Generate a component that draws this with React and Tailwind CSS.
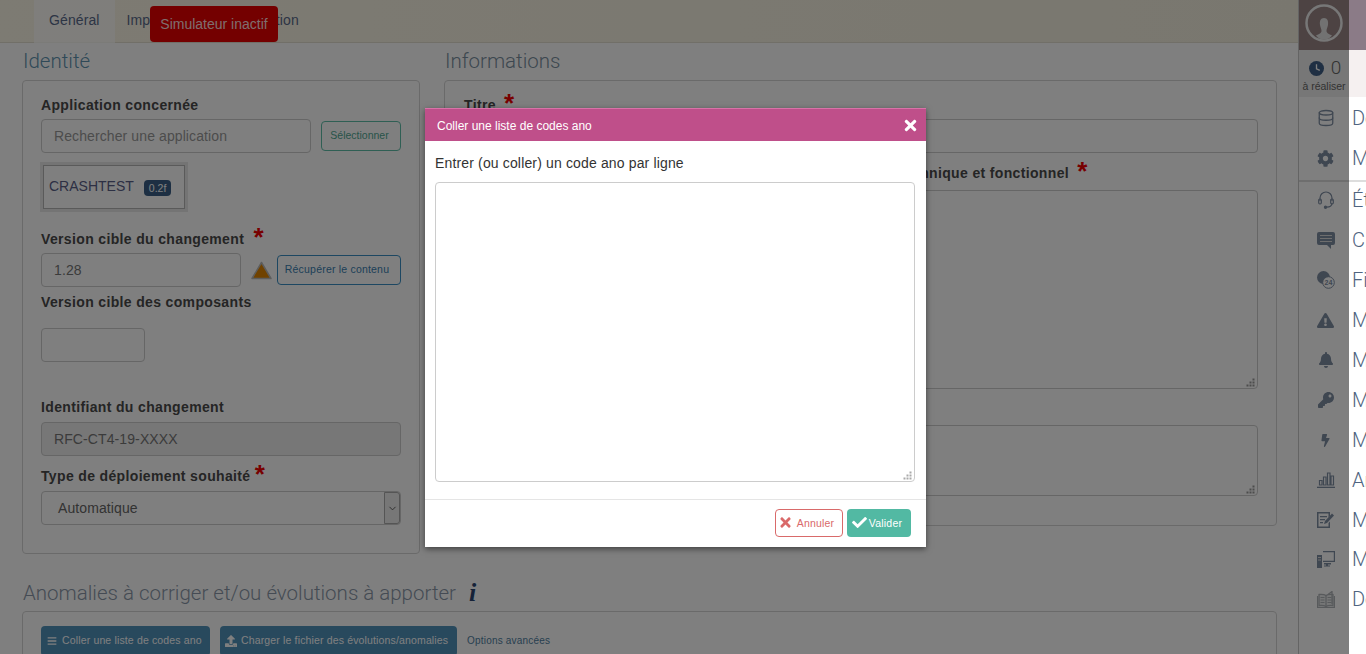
import React from 'react';
import { FaCog, FaExclamationTriangle, FaBell, FaKey, FaBolt, FaCheck, FaTimes, FaBars, FaUpload } from 'react-icons/fa';
import { Database, ChevronDown } from 'lucide-react';

const sans = "font-['Liberation_Sans',Arial,sans-serif]";
const thin = "font-['Roboto',sans-serif] font-light";

const ClockIcon = () => (
  <svg width="15" height="15" viewBox="0 0 16 16">
    <circle cx="8" cy="8" r="8" fill="#3f5f86" />
    <path d="M8 3.5V8.3L11.5 10" stroke="#fff" strokeWidth="1.4" fill="none" />
  </svg>
);

const HeadsetIcon = () => (
  <svg width="16" height="18" viewBox="0 0 16 18" fill="none" stroke="currentColor" strokeWidth="1.2">
    <path d="M2 10V7A6 6 0 0 1 14 7V10" />
    <path d="M14 12C14 15 12 16.2 8.5 16.2" />
    <rect x="0.7" y="8" width="2.6" height="5" rx="1.2" />
    <rect x="12.7" y="8" width="2.6" height="5" rx="1.2" />
    <circle cx="7.5" cy="16.2" r="1.1" fill="currentColor" />
  </svg>
);

const ChatIcon = () => (
  <svg width="18" height="17" viewBox="0 0 18 17" fill="currentColor">
    <path d="M2 0H16A2 2 0 0 1 18 2V11A2 2 0 0 1 16 13H14V17L10 13H2A2 2 0 0 1 0 11V2A2 2 0 0 1 2 0Z" />
    <path d="M3 3.5H15M3 6.5H15M3 9.5H15" stroke="#ddd" strokeWidth="1" />
  </svg>
);

const GlobeIcon = () => (
  <svg width="18" height="18" viewBox="0 0 18 18">
    <circle cx="6.5" cy="6.5" r="6.5" fill="currentColor" />
    <circle cx="11.5" cy="11.5" r="5.8" fill="#fff" stroke="currentColor" strokeWidth="1" />
    <text x="11.5" y="14" fontSize="7" fontWeight="700" textAnchor="middle" fill="currentColor" fontFamily="Liberation Sans">24</text>
  </svg>
);

const ChartIcon = () => (
  <svg width="18" height="16" viewBox="0 0 18 16" fill="none" stroke="currentColor" strokeWidth="1.2">
    <path d="M0 15.4H18" strokeWidth="1.4" />
    <path d="M2.5 13V8.5H5V13ZM6.5 13V5H9V13ZM10.5 13V1H13V13ZM14 13V4H16.5V13Z" />
  </svg>
);

const FormIcon = () => (
  <svg width="17" height="17" viewBox="0 0 17 17" fill="currentColor">
    <path d="M0 1H13V5L11.5 6.5V2.5H1.5V15.5H11.5V12L13 10.5V17H0Z" />
    <path d="M3 5H10V6.2H3ZM3 8H8V9.2H3ZM3 11H6V12.2H3Z" />
    <path d="M7 13L8 10L15 2.5L17 4.5L10 12Z" />
  </svg>
);

const DesktopIcon = () => (
  <svg width="18" height="17" viewBox="0 0 18 17" fill="currentColor">
    <path d="M0 4H5V17H0Z" />
    <path d="M6 0H18V11H6V9.8H16.8V1.2H6Z" />
    <path d="M7 12H14V13.5H11V14.5H13V15.5H7V14.5H9V13.5H7Z" />
    <path d="M1 6H4V7H1ZM1 8.5H4V9.5H1Z" fill="#ddd" />
  </svg>
);

const BookIcon = () => (
  <svg width="18" height="17" viewBox="0 0 18 17" fill="none" stroke="#b0b4b8" strokeWidth="1.3">
    <path d="M9 4.5C7.5 3.5 5 3.2 2 3.5V14.5C5 14.2 7.5 14.5 9 15.5C10.5 14.5 13 14.2 16 14.5V3.5C13 3.2 10.5 3.5 9 4.5Z" fill="#b0b4b8" fillOpacity="0.25" />
    <path d="M9 4.5V15.5M11 3.5L15 0.5V13" />
    <path d="M3.5 6.5H7.5M3.5 9H7.5M3.5 11.5H7.5M10.5 6.5H14.5M10.5 9H14.5M10.5 11.5H14.5" strokeWidth="1" />
    <path d="M0.5 5V16.5H17.5V5" />
  </svg>
);

const menuItems = [
  { label: 'Dépôts', icon: <Database size={18} strokeWidth={1.7} />, row: 'h-[40px]' },
  { label: 'Mes paramètres', icon: <FaCog size={17} />, row: 'h-[40px] box-content pb-[2px] border-b-2 border-[#ddd]' },
  { label: 'État du service', icon: <HeadsetIcon />, row: 'h-[38px] pb-[2px]' },
  { label: 'Changements', icon: <ChatIcon />, row: 'h-[40px]' },
  { label: 'Fiches', icon: <GlobeIcon />, row: 'h-[40px]' },
  { label: 'Mes anomalies', icon: <FaExclamationTriangle size={17} />, row: 'h-[40px]' },
  { label: 'Mes alertes', icon: <FaBell size={16} />, row: 'h-[40px]' },
  { label: 'Mes accès', icon: <FaKey size={16} />, row: 'h-[40px]' },
  { label: 'Mes actions', icon: <FaBolt size={13} />, row: 'h-[40px]' },
  { label: 'Analyses', icon: <ChartIcon />, row: 'h-[40px]' },
  { label: 'Mes demandes', icon: <FormIcon />, row: 'h-[39px]' },
  { label: 'Mes postes', icon: <DesktopIcon />, row: 'h-[40px]' },
  { label: 'Documentation', icon: <BookIcon />, row: 'h-[40px]' },
];

const Star = ({ className = '' }) => (
  <span className={`text-[26px] leading-[14px] font-bold text-[#f00000] align-[-2px] ${className}`}>*</span>
);

const FieldLabel = ({ children, className = '' }) => (
  <div className={`h-[20px] text-[14px] leading-[20px] font-bold tracking-[0.35px] text-[#4a4a4a] whitespace-nowrap ${className}`}>{children}</div>
);

// dotted resize grip in the corner of the text areas
const Grip = ({ color }) => (
  <svg className="absolute right-[3px] bottom-[2px]" width="9" height="9" viewBox="0 0 9 9" fill={color}>
    <path d="M6.5 0.5H8.5V2.5H6.5ZM3.5 3.5H5.5V5.5H3.5ZM6.5 3.5H8.5V5.5H6.5ZM0.5 6.5H2.5V8.5H0.5ZM3.5 6.5H5.5V8.5H3.5ZM6.5 6.5H8.5V8.5H6.5Z" />
  </svg>
);

const TextBox = ({ className = '', grip = '#999' }) => (
  <div className={`relative ${className}`}>
    <textarea className="block w-full h-full resize-none border border-[#ccc] rounded-[4px] outline-none" />
    <Grip color={grip} />
  </div>
);

const inputBox = 'h-[34px] border border-[#ccc] rounded-[4px] px-[12px] flex items-center text-[14px] tracking-[0.1px]';

const App = () => {
  return (
    <div className={`relative w-full h-[654px] overflow-hidden flex bg-white ${sans}`}>
      {/* Main page, under the backdrop */}
      <div className="w-[1298px] shrink-0">
        <div className="h-[43px] border-b border-[#e2dfd0] bg-gradient-to-r from-[#fbf6e6] to-[#f3efdf] pl-[34px] flex text-[14px] tracking-[0.1px] text-[#5a6a8a]">
          <div className="h-[43px] px-[15px] flex items-center bg-white/70 pb-[2px]">Général</div>
          <div className="pl-[12px] pr-[20px] flex items-center pb-[2px]">Impacts</div>
          <div className="px-[15px] flex items-center pb-[2px]">Homologation</div>
        </div>

        <div className="pl-[22px] flex gap-[24px]">
          <div className="w-[398px]">
            <div className={`h-[37px] flex items-center pl-px text-[20.5px] text-[#5f93b0] ${thin}`}>Identité</div>
            <div className="h-[474px] border border-[#d5d5d5] rounded-[4px] pt-[14px] pl-[18px] pr-[18px]">
              <FieldLabel>Application concernée</FieldLabel>
              <div className="mt-[4px] flex items-center gap-[10px]">
                <div className={`${inputBox} w-[270px] text-[#999]`}>Rechercher une application</div>
                <button className="w-[80px] h-[30px] pr-[3px] border border-[#5ebfa9] rounded-[4px] text-[10.5px] text-[#4fa893]">Sélectionner</button>
              </div>
              <div className="mt-[9px] -ml-px w-[148px] h-[50px] border-[3px] border-[#e8e8e8]">
                <div className="h-full border border-[#b4b4b4] flex items-center pl-[5px] pb-[2px] text-[14px] text-[#5a6088]">
                  CRASHTEST
                  <span className="ml-[10px] mt-[3px] px-[5px] h-[16px] leading-[16px] rounded-[4px] bg-[#3a5f86] text-[10.5px] text-white">0.2f</span>
                </div>
              </div>
              <FieldLabel className="mt-[17px]">Version cible du changement <Star className="ml-[5px]" /></FieldLabel>
              <div className="mt-[4px] flex items-center">
                <div className={`${inputBox} w-[200px] text-[#777]`}>1.28</div>
                <svg className="ml-[10px]" width="21" height="19" viewBox="0 0 21 19">
                  <path d="M10.5 1.5L20 17.5H1Z" fill="#e08500" stroke="#bbb" strokeWidth="1.5" strokeLinejoin="round" />
                </svg>
                <button className="ml-[5px] w-[124px] h-[30px] pr-[4px] border border-[#3a8fc4] rounded-[4px] text-[10.5px] tracking-[0.2px] text-[#3a7fb0]">Récupérer le contenu</button>
              </div>
              <FieldLabel className="mt-[5px]">Version cible des composants</FieldLabel>
              <div className={`${inputBox} mt-[16px] w-[104px]`} />
              <FieldLabel className="mt-[35px]">Identifiant du changement</FieldLabel>
              <div className={`${inputBox} mt-[5px] w-[360px] bg-[#eee] text-[#777]`}>RFC-CT4-19-XXXX</div>
              <FieldLabel className="mt-[10px]">Type de déploiement souhaité <Star /></FieldLabel>
              <div className={`${inputBox} mt-[5px] w-[360px] pl-[16px] pr-0 justify-between text-[#666]`}>
                Automatique
                <span className="w-[16px] h-[32px] bg-[#eee] border border-[#aaa] rounded-r-[3px] flex items-center justify-center text-[#555]">
                  <ChevronDown size={11} />
                </span>
              </div>
            </div>
          </div>

          <div className="w-[833px]">
            <div className={`h-[37px] flex items-center pl-px text-[20.5px] text-[#7a8fa0] ${thin}`}>Informations</div>
            <div className="h-[446px] border border-[#d5d5d5] rounded-[4px] pt-[14px] pl-[19px] pr-[18px]">
              <FieldLabel>Titre <Star className="ml-[4px]" /></FieldLabel>
              <div className={`${inputBox} mt-[4px] w-[794px]`} />
              <FieldLabel className="mt-[10px] ml-[2px]">Description détaillée du changement et de tout son périmètre technique et fonctionnel <Star className="ml-[4px]" /></FieldLabel>
              <TextBox className="mt-[7px] w-[794px] h-[199px]" />
              <FieldLabel className="mt-[13px]">Commentaires</FieldLabel>
              <TextBox className="mt-[3px] w-[794px] h-[71px]" />
            </div>
          </div>
        </div>

        <div className="ml-[22px] mt-[21px]">
          <div className={`h-[36px] flex items-center pl-px text-[20.5px] text-[#8a97a8] ${thin}`}>
            Anomalies à corriger et/ou évolutions à apporter
            <span className="ml-[13px] font-['Liberation_Serif',serif] italic font-bold text-[26px] leading-none text-[#2a4570]">i</span>
          </div>
          <div className="w-[1255px] h-[120px] border border-[#d5d5d5] rounded-[4px] pt-[14px] pl-[18px] flex items-start gap-[10px]">
            <button className="h-[30px] w-[169px] pl-[6px] rounded-[4px] bg-[#5092bb] text-white text-[10.5px] tracking-[0.15px] flex items-center gap-[5px]">
              <FaBars size={10} /> Coller une liste de codes ano
            </button>
            <button className="h-[30px] w-[237px] pl-[5px] rounded-[4px] bg-[#5092bb] text-white text-[10.5px] tracking-[0.15px] flex items-center gap-[4px]">
              <FaUpload size={12} /> Charger le fichier des évolutions/anomalies
            </button>
            <span className="text-[10px] tracking-[0.2px] leading-[30px] text-[#4f7f9f]">Options avancées</span>
          </div>
        </div>

        <div className="absolute left-[150px] top-[6px] w-[128px] h-[36px] rounded-[4px] bg-[#e80000] text-[#ffdcdc] text-[14px] flex items-center justify-center">
          Simulateur inactif
        </div>
      </div>

      {/* Right menu */}
      <div className="w-[68px] shrink-0 border-l border-[#c8c8c8]">
        <div className="flex h-[50px]">
          <div className="w-[50px] bg-[#9a8686] flex justify-center pt-[2px]">
            <svg width="40" height="42" viewBox="0 0 40 42">
              <circle cx="20" cy="21" r="17.5" fill="none" stroke="#eee" strokeWidth="2.5" />
              <path d="M20 16C16.5 16 15.5 19 16 23C16.5 25.5 17.5 27 17.5 29C17.5 31.5 14 32.5 12 33.5C14.5 36.5 17 37.5 20 37.5C23 37.5 25.5 36.5 28 33.5C26 32.5 22.5 31.5 22.5 29C22.5 27 23.5 25.5 24 23C24.5 19 23.5 16 20 16Z" fill="#e4e4e4" />
            </svg>
          </div>
          <div className="flex-1 bg-[#8b7b87]" />
        </div>
        <div className="flex h-[47px]">
          <div className="w-[50px] bg-[#eee] flex flex-col items-center pt-[9px] text-[#666]">
            <div className="flex items-center gap-[7px] h-[18px] pl-[2px]">
              <ClockIcon />
              <span className={`text-[19px] ${thin}`}>0</span>
            </div>
            <span className="text-[10.5px] leading-[14px] mt-[2px] whitespace-nowrap">à réaliser</span>
          </div>
          <div className="flex-1 bg-[#f5f0f0]" />
        </div>
        <div className="h-px" />
        {menuItems.map((item) => (
          <div key={item.label} className={`${item.row} flex items-center`}>
            <span className="w-[50px] shrink-0 flex items-center justify-center text-[#7f8ea3] pl-[3px]">{item.icon}</span>
            <span className={`pl-[3px] text-[20px] whitespace-nowrap text-[#4f6480] ${thin}`}>{item.label}</span>
          </div>
        ))}
      </div>

      {/* Backdrop of the modal */}
      <div className="absolute inset-y-0 left-0 right-[17px] bg-black/50" />

      {/* Modal */}
      <div className="absolute left-[425px] top-[108px] w-[501px] h-[439px] bg-white shadow-[0_2px_6px_rgba(0,0,0,0.5)] flex flex-col">
        <div className="h-[33px] shrink-0 bg-[#bf4f8a] border-t border-[#d873a8] pl-[12px] pr-[7px] pt-[1px] flex items-center justify-between text-white text-[12px]">
          Coller une liste de codes ano
          <FaTimes size={17} />
        </div>
        <div className="px-[10px] flex-1">
          <div className="mt-[12px] text-[14px] tracking-[0.15px] leading-[20px] text-[#333]">Entrer (ou coller) un code ano par ligne</div>
          <TextBox className="mt-[9px] w-[480px] h-[300px]" grip="#aaa" />
        </div>
        <div className="h-[48px] shrink-0 border-t border-[#e5e5e5] pr-[15px] pb-[2px] flex items-center justify-end gap-[4px] text-[10.5px] tracking-[0.2px]">
          <button className="w-[68px] h-[28px] pr-[6px] border border-[#d96a6a] rounded-[4px] text-[#d96a6a] flex items-center justify-center gap-[4px]">
            <FaTimes size={15} /> <span className="pt-[2px]">Annuler</span>
          </button>
          <button className="w-[64px] h-[28px] pr-[4px] rounded-[4px] bg-[#52b9a3] text-white flex items-center justify-center gap-[2px]">
            <FaCheck size={15} /> <span className="pt-[2px]">Valider</span>
          </button>
        </div>
      </div>
    </div>
  );
};

export default App;
